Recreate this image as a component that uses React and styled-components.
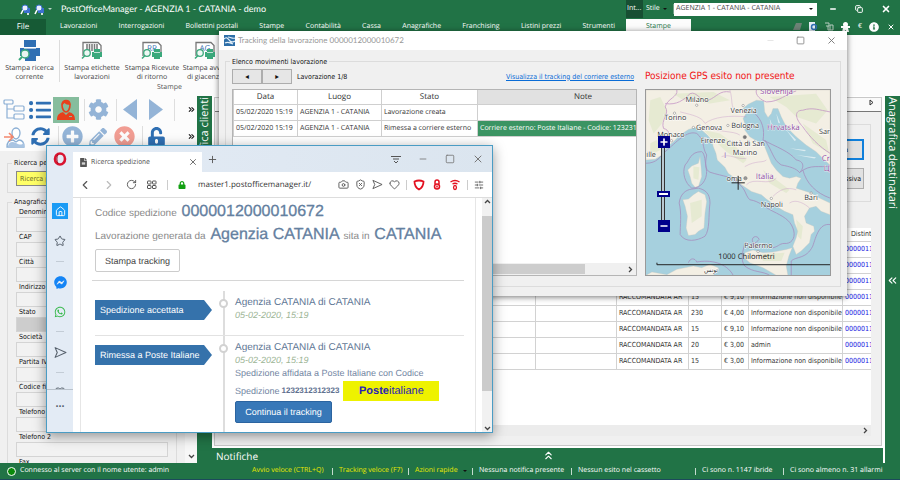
import React from 'react';
import styled, { createGlobalStyle, css } from 'styled-components';
import {
  FaCog,
  FaFacebookMessenger,
  FaInfoCircle,
  FaListUl,
  FaLock,
  FaPencilAlt,
  FaPlusCircle,
  FaSyncAlt,
  FaTimesCircle,
  FaUnlockAlt,
  FaWhatsapp,
  FaFileAlt,
} from 'react-icons/fa';
import {
  Camera,
  ChevronLeft,
  ChevronRight,
  ChevronsLeft,
  ChevronsRight,
  ChevronsUp,
  Copy,
  Heart,
  House,
  Minus,
  Plus,
  RotateCw,
  SendHorizontal,
  ShieldX,
  SlidersHorizontal,
  Square,
  Star,
  X,
} from 'lucide-react';

const ui = '"Open Sans", "Noto Sans", sans-serif';
const tahoma = '"DejaVu Sans Condensed", "DejaVu Sans", sans-serif';
const helvetica = '"Liberation Sans", Arial, sans-serif';

const GlobalStyle = createGlobalStyle`
  * {
    box-sizing: border-box;
  }

  body {
    margin: 0;
    overflow: hidden;
    font-family: ${ui};
    font-size: 7px;
    line-height: 10px;
    color: #333;
    background: #217346;
    text-rendering: geometricPrecision;
  }

  button, input, select {
    margin: 0;
    padding: 0;
    font: inherit;
    color: inherit;
    text-rendering: inherit;
  }
`;

const Desktop = styled.div`
  position: relative;
  display: flex;
  flex-direction: column;
  height: 100vh;
  overflow: hidden;
`;

/* ---------- title bar and menu ---------- */

const TitleBar = styled.header`
  display: flex;
  align-items: center;
  height: 18px;
  padding-left: 20px;
  background: #217346;
  color: #fff;
`;

const QuickIcons = styled.div`
  display: flex;
  align-items: center;
  gap: 4px;
  width: 41px;
`;

const AppTitle = styled.h1`
  flex: 1;
  margin: 0;
  font-family: Lato, sans-serif;
  font-size: 9px;
  font-weight: 400;
`;

const ContextTab = styled.div`
  align-self: stretch;
  width: 17px;
  padding: 4px 0 0 1px;
  background: #174f33;
  white-space: nowrap;
`;

const StyleButton = styled.button`
  display: flex;
  align-items: center;
  justify-content: space-between;
  width: 31px;
  padding: 0 6px 0 3px;
  border: 0;
  border-right: 1px solid #6fa286;
  background: none;
`;

const Caret = styled.span`
  width: 0;
  height: 0;
  border: 2px solid transparent;
  border-top-color: ${(p) => p.$color || '#111'};
  border-bottom: 0;
`;

const SelectBox = styled.label`
  display: flex;
  align-items: center;
  width: 143px;
  height: 13px;
  padding-right: 4px;
  background: #fff;
`;

const AgencySelect = styled.select`
  flex: 1;
  appearance: none;
  padding-left: 2px;
  border: 0;
  background: none;
  color: #444;
`;

const WindowButtons = styled.div`
  display: flex;
  align-items: center;
  justify-content: space-around;
  width: 80px;
  margin-left: 3px;
`;

const IconButton = styled.button`
  display: flex;
  align-items: center;
  justify-content: center;
  border: 0;
  background: none;
  color: ${(p) => p.$color || 'inherit'};
`;

const MenuBar = styled.nav`
  display: flex;
  align-items: center;
  height: 17px;
  background: #217346;
  color: #fff;
`;

const FileTab = styled.button`
  width: 46px;
  height: 16px;
  margin-right: 14px;
  border: 0;
  background: #165a35;
  font-size: 8px;
`;

const MenuItems = styled.div`
  display: flex;
  justify-content: space-between;
  align-items: center;
  width: 555px;
  margin-right: 11px;
`;

const MenuItem = styled.button`
  border: 0;
  background: none;
  white-space: nowrap;
`;

const ActiveMenu = styled.button`
  width: 65px;
  height: 16px;
  border: 0;
  background: #fcfcfc;
  color: #217346;
`;

const MenuTools = styled.div`
  flex: 1;
  display: flex;
  align-items: center;
  justify-content: space-between;
  padding: 0 5px 0 102px;
`;

/* ---------- ribbon ---------- */

const Ribbon = styled.section`
  display: flex;
  flex-direction: column;
  height: 61px;
  padding-top: 5px;
  background: #fcfcfc;
`;

const RibbonRow = styled.div`
  display: flex;
  height: 42px;
`;

const RibbonButton = styled.button`
  display: flex;
  flex-direction: column;
  align-items: center;
  width: ${(p) => p.$width || 59}px;
  border: 0;
  border-right: ${(p) => (p.$divided ? '1px solid #dcdcdc' : '0')};
  background: none;
  line-height: 9px;
  color: #444;
  text-align: center;
  white-space: nowrap;

  svg {
    margin-bottom: 2px;
    flex: none;
  }
`;

const RibbonCaption = styled.div`
  padding-left: 157px;
  line-height: 12px;
  color: #555;
`;

/* ---------- main area ---------- */

const Main = styled.main`
  flex: 1;
  display: flex;
  min-height: 0;
`;

const Side = styled.aside`
  display: flex;
  flex-direction: column;
  width: 197px;
  background: #f0f0f0;
`;

const Toolbars = styled.div`
  height: 55px;
  padding-left: 1px;
  background: #fcfcfc;
`;

const ToolRow = styled.div`
  display: flex;
  align-items: center;
  height: 27px;
`;

const ToolSeparator = styled.span`
  width: 6px;
  height: 22px;
  border-right: 1px solid #dedede;
`;

const Tool = styled.button`
  display: flex;
  align-items: center;
  justify-content: center;
  width: 26px;
  height: 26px;
  border: 0;
  background: ${(p) => (p.$active ? '#86bd9d' : 'none')};
  color: ${(p) => p.$color || '#2f6fb3'};
  opacity: ${(p) => (p.$dim ? 0.5 : 1)};
`;

const Overflow = styled(Tool)`
  width: 12px;
  margin-left: auto;
`;

const SideBody = styled.div`
  flex: 1;
  display: flex;
  min-height: 0;
`;

const SideForm = styled.form`
  flex: 1;
  min-height: 0;
  overflow: hidden;
  padding: 7px 8px 0 7px;
  font-family: ${tahoma};
  font-size: 7px;
  color: #111;
`;

const Group = styled.fieldset`
  margin: 0 0 4px;
  padding: ${(p) => p.$padding || '3px 8px 6px'};
  border: 1px solid #dcdcdc;
  min-width: 0;

  legend {
    margin-left: -4px;
    padding: 0 2px;
  }
`;

const Field = styled.label`
  display: block;
  height: 25px;

  span {
    display: block;
    padding-left: 3px;
  }
`;

const fieldBox = css`
  display: block;
  width: 100%;
  height: 15px;
  border: 1px solid #d4d4d4;
  border-radius: 0;
  background: ${(p) => p.$bg || '#f2f2f2'};
`;

const TextInput = styled.input`
  ${fieldBox}
`;

const FieldSelect = styled.select`
  ${fieldBox}
  appearance: none;
`;

const SearchInput = styled.input`
  ${fieldBox}
  padding-left: 3px;
  border: 1px solid #888;
  background: #ffff66;
  color: #6b6b2c;
`;

const SideScroll = styled.div`
  display: flex;
  align-items: flex-end;
  justify-content: center;
  width: 12px;
  padding-bottom: 3px;
  background: #f7f7f7;
`;

const Strip = styled.div`
  display: flex;
  flex-direction: column;
  align-items: center;
  width: 15px;
  padding-top: 1px;
  background: #217346;
  color: #fff;
  font-size: 11px;
  line-height: 15px;

  span {
    writing-mode: vertical-rl;
    transform: ${(p) => (p.$up ? 'rotate(180deg)' : 'none')};
  }

  svg {
    margin-top: 65px;
  }
`;

const Center = styled.div`
  flex: 1;
  display: flex;
  flex-direction: column;
  min-width: 0;
  border-right: 2px solid #fff;
  background: #fff;
`;

const CenterPanel = styled.div`
  flex: 1;
  display: flex;
  flex-direction: column;
  min-height: 0;
  margin: 1px 1px 2px 2px;
  border: 1px solid #c8c8c8;
  background: #f0f0f0;
  font-family: ${tahoma};
  font-size: 7px;
`;

const PanelHead = styled.div`
  display: flex;
  justify-content: flex-end;
  align-items: center;
  height: 14px;
  padding-right: 7px;
  border-bottom: 1px solid #777;
  background: #fafafa;

  svg {
    margin-bottom: 4px;
  }
`;

const ActionBox = styled.div`
  display: flex;
  flex-direction: column;
  align-items: flex-end;
  gap: 8px;
  height: 78px;
  margin: 12px 10px 26px 4px;
  padding: 14px 6px 0 0;
  border: 1px solid #dcdcdc;
`;

const PanelButton = styled.button`
  width: 80px;
  height: 21px;
  padding-right: ${(p) => (p.$focus ? 14 : 2)}px;
  border: ${(p) => (p.$focus ? '2px solid #0f7fdb' : '1px solid #adadad')};
  background: #e1e1e1;
  color: #111;
  text-align: right;
`;

const GridScroller = styled.div`
  flex: 1;
  margin: 0 10px 0 3px;
  overflow: hidden;
  background: #fff;
`;

const ShipTable = styled.table`
  width: 700px;
  table-layout: fixed;
  border-collapse: collapse;
  line-height: 10px;
  white-space: nowrap;

  th {
    height: 13px;
    padding: 0 0 0 8px;
    border-right: 1px solid #ddd;
    font-weight: 400;
    text-align: left;
  }

  td {
    height: 16px;
    padding: 0 2px;
    border: 1px solid #d2d2d2;
    overflow: hidden;
  }

  td:last-child {
    color: #1414e0;
  }
`;

const PanelScroll = styled.div`
  display: flex;
  align-items: center;
  justify-content: flex-end;
  height: 11px;
  margin: 0 10px 9px 3px;
  padding-right: 2px;
  background: #ececec;
`;

const Notices = styled.div`
  display: flex;
  align-items: center;
  justify-content: space-between;
  height: 15px;
  padding: 0 328px 0 4px;
  background: #217346;
  color: #fff;
  font-size: 10px;
`;

/* ---------- status bar ---------- */

const StatusBar = styled.footer`
  display: grid;
  grid-template-columns: 252px 87px 76px 64px 99px 124px 88px 1fr;
  align-items: center;
  height: 17px;
  background: #217346;
  border-bottom: 1px solid #1c4a5c;
  color: #fff;
  white-space: nowrap;
`;

const StatusItem = styled.div`
  display: flex;
  align-items: center;
  justify-content: space-between;
  padding-right: 6px;
  color: ${(p) => (p.$accent ? '#e8e800' : '#fff')};

  i {
    width: 1px;
    height: 7px;
    background: #c4dccf;
  }
`;

const ServerState = styled.div`
  display: flex;
  align-items: center;
  gap: 4px;
  padding-left: 7px;
`;

const Led = styled.span`
  width: 9px;
  height: 9px;
  border: 1px solid #fff;
  border-radius: 50%;
  background: #0a8a0a;
`;

/* ---------- tracking window ---------- */

const TrackingWindow = styled.section`
  position: absolute;
  left: 219px;
  top: 31px;
  display: flex;
  flex-direction: column;
  width: 628px;
  height: 265px;
  background: #f0f0f0;
  box-shadow: 0 1px 6px rgba(0, 0, 0, 0.55);
`;

const TrackingTitle = styled.header`
  display: flex;
  align-items: center;
  gap: 3px;
  height: 20px;
  padding: 0 10px 0 5px;
  background: #fff;
  color: #999;

  h2 {
    flex: 1;
    margin: 0;
    font-family: Lato, sans-serif;
    font-size: 8px;
    font-weight: 400;
  }
`;

const TitleControls = styled.div`
  display: flex;
  align-items: center;
  gap: ${(p) => p.$gap}px;
  color: #777;
`;

const TrackingGroup = styled.fieldset`
  flex: 1;
  display: grid;
  grid-template-columns: 405px 1fr;
  column-gap: 8px;
  min-width: 0;
  margin: 7px 6px 9px;
  padding: 3px 9px 10px 6px;
  border: 1px solid #dcdcdc;
  font-family: ${tahoma};
  font-size: 7px;

  legend {
    margin-left: -2px;
    padding: 0 2px;
    color: #111;
  }
`;

const Column = styled.div`
  display: flex;
  flex-direction: column;
  min-height: 0;
`;

const Pager = styled.div`
  display: flex;
  align-items: center;
  height: 14px;
  margin-bottom: 5px;
  color: #111;

  span {
    flex: 1;
    padding-left: 5px;
  }
`;

const PagerButton = styled.button`
  width: 30px;
  height: 15px;
  border: 1px solid #adadad;
  background: #e6e6e6;
  font-size: 8px;
  line-height: 8px;
`;

const CourierLink = styled.a`
  padding-right: 3px;
  color: #0a6cd6;
`;

const MovesBox = styled.div`
  flex: 1;
  display: flex;
  flex-direction: column;
  justify-content: space-between;
  overflow: hidden;
  border: 1px solid #b5b5b5;
  background: #fff;
`;

const MovesTable = styled.table`
  width: 456px;
  table-layout: fixed;
  border-collapse: collapse;
  font-family: ${ui};
  white-space: nowrap;

  th {
    height: 15px;
    padding: 0;
    border: 1px solid #cfcfcf;
    border-top: 0;
    font-size: 8px;
    font-weight: 400;
  }

  th:last-child {
    background: #e1e1e1;
  }

  td {
    height: 16px;
    padding: 0 0 0 2px;
    border: 1px solid #cfcfcf;
    overflow: hidden;
  }
`;

const NoteCell = styled.td`
  background: ${(p) => (p.$selected ? '#3b9463' : '#fff')};
  color: #fff;
`;

const MovesScroll = styled.div`
  display: flex;
  align-items: center;
  justify-content: space-between;
  height: 12px;
  padding-right: 2px;
  background: #f0f0f0;
`;

const HThumb = styled.div`
  width: 352px;
  height: 10px;
  background: #cdcdcd;
`;

const GpsNote = styled.p`
  margin: 0 0 5px;
  font-size: 10px;
  line-height: 14px;
  color: #f01414;
  white-space: nowrap;
`;

const MapFrame = styled.div`
  position: relative;
  flex: 1;
  border: 1px solid #999;

  > svg {
    display: block;
    width: 100%;
    height: 100%;
  }
`;

const ZoomBar = styled.div`
  position: absolute;
  left: 11px;
  top: 46px;
  display: flex;
  flex-direction: column;
  align-items: center;
  width: 13px;
`;

const ZoomButton = styled.button`
  display: flex;
  align-items: center;
  justify-content: center;
  width: 12px;
  height: 12px;
  border: 0;
  background: #00008b;
  color: #fff;
`;

const ZoomRange = styled.input`
  appearance: none;
  writing-mode: vertical-lr;
  width: 13px;
  height: 72px;
  background: linear-gradient(90deg, transparent 4px, #333 4px 5px, #b8c8d0 5px 7px, #333 7px 8px, transparent 8px);

  &::-webkit-slider-thumb {
    appearance: none;
    width: 13px;
    height: 6px;
    border: 2px solid #00008b;
    background: #fff;
  }
`;

/* ---------- browser window ---------- */

const BrowserWindow = styled.section`
  position: absolute;
  left: 46px;
  top: 145px;
  display: grid;
  grid-template-columns: 26px 1fr;
  width: 447px;
  height: 288px;
  border: 1px solid #4a9cc4;
  background: #fff;
  box-shadow: 0 3px 12px rgba(0, 0, 0, 0.4);
`;

const BrowserSide = styled.nav`
  display: flex;
  flex-direction: column;
  align-items: center;
  padding-top: 6px;
  background: #e3ebf5;
  color: #555f6b;

  hr {
    width: 8px;
    margin: 0;
    border: 0;
    border-top: 1px solid #c3ccd6;
  }
`;

const SideIcon = styled.button`
  display: flex;
  align-items: center;
  justify-content: center;
  width: 16px;
  height: 16px;
  margin: ${(p) => p.$gap || '0'};
  border: 0;
  background: ${(p) => (p.$active ? '#1a9bf5' : 'none')};
  color: ${(p) => p.$color || 'inherit'};
  font-size: 8px;
`;

const HalfIcon = styled.div`
  width: 100%;
  height: 4px;
  margin-top: 13px;
  overflow: hidden;
  border-bottom: 1px solid #b9c2cc;
  text-align: center;
`;

const BrowserMain = styled.div`
  display: flex;
  flex-direction: column;
  min-width: 0;
  min-height: 0;
`;

const TabBar = styled.div`
  display: flex;
  align-items: center;
  height: 26px;
  padding-right: 8px;
  background: linear-gradient(90deg, #e3ebf5, #dbe5ef);
  color: #555;
`;

const BrowserTab = styled.div`
  display: flex;
  align-items: center;
  gap: 3px;
  align-self: flex-end;
  width: 129px;
  height: 20px;
  margin-right: 5px;
  padding: 0 4px 0 6px;
  background: #fff;

  span {
    flex: 1;
    font-family: ${tahoma};
  }
`;

const Spacer = styled.div`
  flex: 1;
`;

const AddressRow = styled.div`
  display: flex;
  align-items: center;
  gap: 6px;
  height: 26px;
  padding: 0 8px 0 5px;
  border-bottom: 1px solid #ddd;
  color: #555;
`;

const NavButtons = styled.div`
  display: flex;
  align-items: center;
  justify-content: space-between;
  width: 108px;
`;

const Address = styled.input`
  flex: 1;
  min-width: 0;
  padding-left: 6px;
  border: 0;
  background: none;
  color: #333;
  font-size: 8px;
`;

const Divider = styled.span`
  width: 1px;
  height: 10px;
  background: #ccc;
`;

const PageArea = styled.div`
  flex: 1;
  display: flex;
  min-height: 0;
`;

const Page = styled.article`
  flex: 1;
  overflow: hidden;
  margin: 0 6px 0 7px;
  padding: 4px 11px 0;
  border: solid #e6e6e6;
  border-width: 0 1px;
  font-family: ${helvetica};
  color: #8a8a8a;
  line-height: 12px;
`;

const Heading = styled.p`
  margin: 0;
  padding-left: 3px;
  font-size: 10px;
  line-height: 23px;
  white-space: nowrap;

  strong {
    margin: 0 1px 0 2px;
    font-size: 16px;
    font-weight: 400;
    line-height: 20px;
    color: #6480a0;
    -webkit-text-stroke: 0.3px #6480a0;
  }
`;

const PrintButton = styled.button`
  display: block;
  width: 85px;
  height: 23px;
  margin: 1px 0 8px 3px;
  border: 1px solid #ccc;
  border-radius: 2px;
  background: #fff;
  color: #444;
  font-size: 9px;
`;

const Timeline = styled.ol`
  margin: 0;
  padding: 10px 0 0 3px;
  border-top: 1px solid #d6d6d6;
  list-style: none;
`;

const Step = styled.li`
  display: grid;
  grid-template-columns: 124px 9px 1fr;
  min-height: ${(p) => p.$height}px;

  &:not(:last-child) {
    border-bottom: 1px solid #e2e2e2;
  }
`;

const Arrow = styled.div`
  width: 117px;
  height: 20px;
  margin-top: 9px;
  padding-left: 5px;
  background: #3572ab;
  clip-path: polygon(0 0, 109px 0, 100% 50%, 109px 100%, 0 100%);
  color: #fff;
  font-size: 9px;
  line-height: 20px;
`;

const Rail = styled.div`
  display: flex;
  justify-content: center;
  padding-top: 8px;
  background: linear-gradient(90deg, transparent 4px, #ddd 4px 6px, transparent 6px);

  i {
    width: 9px;
    height: 9px;
    border: 2px solid #d2d2d2;
    border-radius: 50%;
    background: #fff;
  }
`;

const StepBody = styled.div`
  padding: 6px 0 0 7px;
  font-size: 9px;
  color: #7286a3;
  white-space: nowrap;

  h3 {
    margin: 0;
    font-size: 10px;
    font-weight: 400;
    color: #5f7896;
  }

  time {
    display: block;
    font-style: italic;
    color: #9db596;
  }

  p {
    margin: 0;
    line-height: 15px;
  }
`;

const CodeLine = styled.div`
  display: flex;
  align-items: center;
  height: 20px;

  b {
    margin: 0 4px 0 2px;
    font-size: 8px;
    color: #5f7190;
  }
`;

const PosteLogo = styled.span`
  width: 96px;
  height: 20px;
  background: #eef200;
  color: #2a1fb5;
  font-size: 11px;
  line-height: 20px;
  text-align: center;

  strong {
    font-weight: 700;
  }
`;

const ContinueButton = styled.button`
  width: 97px;
  height: 22px;
  border: 1px solid #2b64a0;
  border-radius: 2px;
  background: #3878b8;
  color: #fff;
`;

const VScroll = styled.div`
  display: flex;
  flex-direction: column;
  justify-content: space-between;
  align-items: center;
  width: 10px;
  background: #f1f1f1;
`;

const VThumb = styled.div`
  width: 100%;
  height: 175px;
  margin-bottom: 24px;
  background: #cbcbcb;
`;

/* ---------- drawings ---------- */

const SmallChevron = ({ up, right }) => (
  <svg width="7" height="7" viewBox="0 0 7 7" fill="none" stroke="#444" strokeWidth="1.3">
    <path d={right ? 'M2 1L4.5 3.5L2 6' : up ? 'M1 5L3.5 2.5L6 5' : 'M1 2L3.5 4.5L6 2'} />
  </svg>
);

const QuickPrint = () => (
  <svg width="10" height="11" viewBox="0 0 10 11">
    <path d="M4 4h6v5H4z" fill="#3b70d0" />
    <circle cx="5" cy="4" r="3" fill="#e8eefc" stroke="#3b70d0" />
    <path d="M3 6L1 10M8 9v2" stroke="#fff" strokeWidth="1.6" />
  </svg>
);

const PrinterIcon = () => (
  <svg width="24" height="22" viewBox="0 0 24 22">
    <path d="M6 0h12v7H6zM2 8h20v8H2zM7 14h11v7H7z" fill="#2f6fb3" />
    <path d="M6 8h12" stroke="#fff" strokeWidth="1.2" />
    <circle cx="7" cy="14" r="4" fill="#e9f4f1" stroke="#3ba97c" strokeWidth="1.4" />
    <path d="M4 17l-3 3" stroke="#3ba97c" strokeWidth="2" />
  </svg>
);

const LabelIcon = ({ text }) => (
  <svg width="24" height="22" viewBox="0 0 24 22">
    <path d="M3 16V2.500h15l3 3V14" fill="#fff" stroke="#777" strokeWidth="1.3" />
    {text ? (
      <text x="12" y="11" textAnchor="middle" fontSize="8" fontFamily="Open Sans" fill="#3a6fb0">{text}</text>
    ) : (
      <path d="M7 4v7M9.500 4v7M12 4v7M14.500 4v7M17 4v7" stroke="#777" strokeWidth="1.5" />
    )}
    <circle cx="7" cy="13" r="3.300" fill="#eef8f4" stroke="#3ba97c" strokeWidth="1.3" />
    <path d="M5 15.500l-3 3" stroke="#3ba97c" strokeWidth="1.6" />
    <path d="M14 9h6v3h-6zM12 12h10v5H12zM14 15h6v4h-6z" fill="#3ba97c" />
    <path d="M14 12.500h6" stroke="#fff" strokeWidth=".7" />
  </svg>
);

const TreeIcon = () => (
  <svg width="22" height="22" viewBox="0 0 22 22" fill="none" stroke="#8aaed4" strokeWidth="1.2">
    <path d="M4 5v14h7M4 10h7" />
    <rect x="1" y="1" width="9" height="4" rx="1" />
    <rect x="11" y="7" width="10" height="5" rx="1" />
    <rect x="11" y="15" width="10" height="5" rx="1" />
  </svg>
);

const OperatorIcon = () => (
  <svg width="22" height="22" viewBox="0 0 22 22">
    <path d="M7 6c0-6 8-6 8 0c0 4-2 7-4 7S7 10 7 6z" fill="#86bd9d" stroke="#e8401c" strokeWidth="1.6" />
    <path d="M6.500 6c0-6 9-6 9 0c-3 0-5-1-6-2c-1 1-2 2-3 2z" fill="#e8401c" />
    <path d="M2 21c0-6 3-7 6-8l3 3 3-3c3 1 6 2 6 8z" fill="#e8401c" />
    <path d="M14 17.500h3" stroke="#86bd9d" />
  </svg>
);

const CustomerIcon = () => (
  <svg width="22" height="22" viewBox="0 0 22 22">
    <path d="M9 7a4 5 0 0 1 8 0c0 3-2 6-4 6s-4-3-4-6zM4 21c0-5 3-7 6-7l3 2 3-2c3 0 5 2 5 7z" fill="#fff" stroke="#8aaed4" strokeWidth="1.3" />
    <path d="M5 20c1-4 4-5 8-3s5 2 8 0v4H5z" fill="#a9c4e2" />
    <path d="M1 11h8M6 7l4 4-4 4" fill="none" stroke="#f2866c" strokeWidth="1.6" />
  </svg>
);

const Triangle = ({ right }) => (
  <svg width="16" height="21" viewBox="0 0 16 21">
    <path d={right ? 'M1 0L15 10.500L1 21z' : 'M15 0L1 10.500L15 21z'} fill="#2f6fb3" />
  </svg>
);

const BrandIcon = () => (
  <svg width="11" height="11" viewBox="0 0 11 11">
    <rect width="11" height="11" fill="#2d6ea8" />
    <path d="M0 4c3-3 4 0 6 2s3 1 5 0M1 8c3-2 5 0 8 1M4 2c3 0 4 2 7 1" fill="none" stroke="#e5f0f8" strokeWidth="1.2" />
  </svg>
);

const OperaIcon = () => (
  <svg width="14" height="14" viewBox="0 0 14 14">
    <ellipse cx="7" cy="7" rx="5" ry="5.500" fill="none" stroke="#d91430" strokeWidth="2.600" />
    <path d="M5 2.500C3.500 5 3.500 9 5 11.500" fill="none" stroke="#a50d22" strokeWidth="1" />
  </svg>
);

const PlaneIcon = ({ size }) => (
  <svg width={size} height={size} viewBox="0 0 12 12" fill="none" stroke="currentColor" strokeLinejoin="round">
    <path d="M1 1.500L11 6L1 10.500L3 6z" />
  </svg>
);

const SpeedDial = () => (
  <svg width="10" height="10" viewBox="0 0 10 10" fill="none" stroke="#555">
    <rect x=".5" y="1" width="3.500" height="3" rx=".5" />
    <rect x="5.500" y="1" width="3.500" height="3" rx=".5" />
    <rect x=".5" y="5.500" width="3.500" height="3" rx=".5" />
    <rect x="5.500" y="5.500" width="3.500" height="3" rx=".5" />
  </svg>
);

const TabMenuIcon = () => (
  <svg width="10" height="9" viewBox="0 0 10 9" fill="none" stroke="#555">
    <path d="M0 1.500h10M2 4h6M3 6l2 2 2-2" />
  </svg>
);

const VpnIcon = ({ kind }) => (
  <svg width="12" height="12" viewBox="0 0 12 12" fill="none" stroke="#e3101f" strokeWidth="1.800">
    {kind === 'shield' && <path d="M1.500 2.500Q6 .5 10.500 2.500Q10.500 8 6 10.500Q1.500 8 1.500 2.500z" />}
    {kind === 'lock' && <path d="M4 5V3a2 2 0 0 1 4 0v2M6 5a2.500 2.500 0 1 1 0 5a2.500 2.500 0 1 1 0-5M6 6.500v2" strokeWidth="1.500" />}
    {kind === 'wifi' && <path d="M1.500 3Q6 0 10.500 3M3.500 5Q6 3.500 8.500 5M6 6.500a1.300 1.800 0 1 1 0 4a1.300 1.800 0 1 1 0-4" strokeWidth="1.300" />}
  </svg>
);

const places = [
  ['Milano', 166, 65],
  ['Venezia', 302, 98],
  ['Torino', 102, 121],
  ['Genova', 198, 149],
  ['Bologna', 304, 144],
  ['Monaco', 81, 171],
  ['Firenze', 212, 188],
  ['Città di San', 290, 198],
  ['Marino', 309, 225],
  ['oma', 290, 303],
  ['Napoli', 393, 382],
  ['Bari', 524, 362],
  ['Palermo', 343, 507],
  ['ille', 48, 231],
  ['Sar', 569, 162],
];

const countries = [
  ['Slovenija', 391, 41],
  ['Hrvatska', 412, 149],
  ['Italia', 378, 298],
  ['I', 282, 235],
  ['Cr', 577, 242],
  ['Ц', 583, 272],
];

const towns = [
  [200, 75], [133, 99], [340, 76], [190, 142], [294, 136], [124, 182], [425, 356], [545, 340], [385, 516],
];

const ItalyMap = () => (
  <svg viewBox="47 29 555 559" preserveAspectRatio="none" fontFamily="Open Sans, sans-serif" fontSize="22">
    <rect x="47" y="29" width="555" height="559" fill="#a6d0de" />
    <g fill="#f3efe4" stroke="#c9c8c0">
      <path d="M47 29V240L75 238L95 225L110 200L130 185L150 165L175 148L195 142L215 150L232 165L245 180L250 200L258 220L262 240L285 262L295 280L315 295L335 315L365 335L395 345L410 358L440 380L465 395L490 405L495 430L505 455L500 475L490 500L500 525L515 515L540 490L545 465L555 455L553 440L530 430L525 410L540 385L560 380L575 395L602 405V370L570 355L545 340L500 325L505 310L515 295L500 290L480 295L460 290L440 270L425 250L415 225L405 200L385 185L360 170L345 150L345 130L340 115L350 98L340 85L355 72L380 60L402 62L405 95L415 112L425 100L430 85L445 85L455 110L465 130L480 150L500 170L530 195L560 215L580 235L602 255V29z" />
      <path d="M210 230L213 260L215 290L205 320L195 322L185 310L180 290L173 270L185 258L205 250z" />
      <path d="M205 335L225 345L230 365L225 400L222 445L205 455L195 465L175 468L168 445L172 410L165 380L158 360L175 358L190 345z" />
      <path d="M345 520L370 512L400 520L430 518L470 510L488 505L478 530L470 560L475 588H440L400 565L360 550L343 535z" />
      <path d="M47 588L65 578L110 586L140 570L190 560L215 565L240 555L265 565L250 588z" />
    </g>
    <g fill="#d3e4b9" opacity=".4">
      <path d="M60 60L90 50L110 90L95 130L70 160L55 120zM130 40L250 35L300 60L240 70L160 60zM420 50L560 40L595 90L560 130L500 110L470 80zM220 150L270 160L310 190L350 240L340 250L290 215L240 170z" />
      <path d="M400 270L440 300L480 330L470 340L420 310zM190 260L208 262L205 300L190 295zM180 370L215 360L215 410L185 430zM500 420L520 440L515 480L505 470zM390 525L465 520L455 545L400 545zM520 130L590 180L600 220L550 190zM60 190L80 180L90 210L60 225z" />
    </g>
    <g fill="none" stroke="#a67bb5" strokeWidth="2.500" opacity=".75">
      <path d="M47 250C80 250 90 230 105 215C140 185 170 150 200 160C225 180 215 200 230 225C225 250 225 270 240 277C280 290 310 290 325 310C350 330 345 345 360 360C390 365 400 380 430 395C460 410 480 420 490 445C500 470 490 490 470 492C450 490 450 500 430 505" />
      <path d="M215 215C180 215 180 240 165 255C155 280 165 310 185 325C215 325 230 300 230 275C225 245 225 220 215 215z" />
      <path d="M185 328C165 330 150 345 147 370C155 400 150 440 150 465C165 490 200 485 225 470C240 450 235 410 240 370C240 340 225 330 205 325z" />
      <path d="M370 95C400 120 405 150 400 180C440 200 480 215 500 240C530 245 520 270 510 278C500 265 480 260 455 255C430 240 430 215 405 180M510 278C545 250 570 265 602 258M520 270C530 310 560 340 602 355" />
      <path d="M602 435C570 430 560 470 550 500C530 540 500 530 485 545V588M370 490C360 470 385 465 388 480C380 490 365 500 345 490C340 515 330 540 345 560C370 580 400 575 420 588M175 550C180 535 195 535 200 548C240 540 290 550 310 588" />
    </g>
    <g fill="none" stroke="#c08bc4" strokeWidth="3" opacity=".7">
      <path d="M140 29C145 50 110 55 105 80C120 100 90 120 100 145C120 150 115 165 120 180M105 70C140 75 160 60 180 40C200 30 215 70 235 60C260 50 270 29 300 35M380 29C375 45 395 60 410 65C450 65 470 40 500 32M602 95C570 90 550 80 520 90C490 90 500 120 520 140C540 170 570 200 602 220" />
      <path d="M150 95C190 105 215 110 225 130C250 110 300 105 350 110M300 29C310 60 300 80 320 95M230 135C260 160 310 150 330 165M275 230C300 220 320 240 350 235M345 260C380 240 400 250 410 240M350 315C370 290 420 320 440 295M430 350C450 330 470 320 500 330M480 370C500 355 530 375 540 385" strokeWidth="1.500" />
    </g>
    <g fill="#e8f3f5" opacity=".8">
      <path d="M420 115L428 135L424 140zM440 100L452 130L446 128zM470 150L500 180L495 183zM480 205L530 210L525 214zM500 225L560 232L555 236z" />
    </g>
    <g fill="#fff" stroke="#777" strokeWidth="1.500">
      {towns.map(([x, y]) => <circle key={`${x}-${y}`} cx={x} cy={y} r="3.500" />)}
      <circle cx="345" cy="171" r="5" fill="#777" />
      <circle cx="347" cy="295" r="5" fill="#999" />
    </g>
    <g fill="#333" stroke="#fff" strokeWidth="3" paintOrder="stroke">
      {places.map(([name, x, y]) => <text key={name} x={x} y={y}>{name}</text>)}
      <text x="222" y="578" fontFamily="DejaVu Sans" fontSize="18">تونس</text>
    </g>
    <g fill="#8d4a9c" stroke="#fff" strokeWidth="2" paintOrder="stroke" fontSize="24">
      {countries.map(([name, x, y]) => <text key={name} x={x} y={y}>{name}</text>)}
    </g>
    <text x="265" y="539" fill="#222" fontSize="23">1000 Chilometri</text>
    <path d="M80 550V556H602M325 288V330M305 309H345" fill="none" stroke="#222" strokeWidth="3" />
  </svg>
);

/* ---------- data ---------- */

const menus = [
  'Lavorazioni', 'Interrogazioni', 'Bollettini postali', 'Stampe', 'Contabilità',
  'Cassa', 'Anagrafiche', 'Franchising', 'Listini prezzi', 'Strumenti',
];

const fields = [
  'Denominazione', 'CAP', 'Città', 'Indirizzo', 'Stato', 'Società', 'Partita IVA',
  'Codice fiscale', 'Telefono', 'Telefono 2', 'Fax',
];

const shipments = [
  ['15', '€ 3,00', 'Informazione non disponibile'],
  ['15', '€ 3,00', 'Informazione non disponibile'],
  ['15', '€ 9,10', 'Informazione non disponibile'],
  ['15', '€ 9,10', 'Informazione non disponibile'],
  ['230', '€ 4,00', 'Informazione non disponibile'],
  ['15', '€ 9,10', 'Informazione non disponibile'],
  ['20', '€ 3,00', 'admin'],
  ['15', '€ 3,00', 'Informazione non disponibile'],
];

const SidePanel = () => (
  <Side>
    <Toolbars>
      <ToolRow>
        <Tool aria-label="Albero"><TreeIcon /></Tool>
        <Tool aria-label="Elenco"><FaListUl size={22} /></Tool>
        <Tool aria-label="Cliente" $active><OperatorIcon /></Tool>
        <ToolSeparator />
        <Tool aria-label="Impostazioni" $dim><FaCog size={21} /></Tool>
        <ToolSeparator />
        <Tool aria-label="Precedente" $dim><Triangle /></Tool>
        <Tool aria-label="Successivo" $dim><Triangle right /></Tool>
        <ToolSeparator />
        <Overflow aria-label="Altro" $color="#222"><ChevronsRight size={9} strokeWidth={3} /></Overflow>
      </ToolRow>
      <ToolRow>
        <Tool aria-label="Carica cliente"><CustomerIcon /></Tool>
        <Tool aria-label="Aggiorna"><FaSyncAlt size={19} /></Tool>
        <ToolSeparator />
        <Tool aria-label="Aggiungi" $dim><FaPlusCircle size={21} /></Tool>
        <Tool aria-label="Modifica" $dim><FaPencilAlt size={18} /></Tool>
        <Tool aria-label="Elimina" $dim $color="#e8402c"><FaTimesCircle size={21} /></Tool>
        <ToolSeparator />
        <Tool aria-label="Sblocca"><FaUnlockAlt size={19} /></Tool>
        <Overflow aria-label="Altri comandi" $color="#222"><ChevronsRight size={9} strokeWidth={3} /></Overflow>
      </ToolRow>
    </Toolbars>
    <SideBody>
      <SideForm>
        <Group>
          <legend>Ricerca per</legend>
          <SearchInput aria-label="Ricerca per" defaultValue="Ricerca per nome" />
        </Group>
        <Group $padding="0 8px 0">
          <legend>Anagrafica</legend>
          {fields.map((name) => (
            <Field key={name}>
              <span>{name}</span>
              {name === 'Stato' ? <FieldSelect $bg="#cdcdcd" /> : <TextInput />}
            </Field>
          ))}
        </Group>
      </SideForm>
      <SideScroll><SmallChevron /></SideScroll>
    </SideBody>
  </Side>
);

const CenterArea = () => (
  <Center>
    <CenterPanel>
      <PanelHead>
        <svg width="5" height="7" viewBox="0 0 5 7"><path d="M1 1L4 3.500L1 6z" fill="none" stroke="#333" /></svg>
      </PanelHead>
      <ActionBox>
        <PanelButton $focus>Ricerca</PanelButton>
        <PanelButton>Ricerca massiva</PanelButton>
      </ActionBox>
      <GridScroller>
        <ShipTable>
          <colgroup>
            <col style={{ width: 317 }} />
            <col style={{ width: 81 }} />
            <col style={{ width: 72 }} />
            <col style={{ width: 33 }} />
            <col style={{ width: 27 }} />
            <col style={{ width: 94 }} />
            <col />
          </colgroup>
          <thead>
            <tr><th /><th /><th>Prodotto</th><th>Peso</th><th /><th>Utente</th><th>Distinta</th></tr>
          </thead>
          <tbody>
            {shipments.map(([weight, price, user], i) => (
              <tr key={i}>
                <td />
                <td />
                <td>RACCOMANDATA AR</td>
                <td>{weight}</td>
                <td>{price}</td>
                <td>{user}</td>
                <td>0000011</td>
              </tr>
            ))}
          </tbody>
        </ShipTable>
      </GridScroller>
      <PanelScroll><SmallChevron right /></PanelScroll>
    </CenterPanel>
    <Notices>
      <span>Notifiche</span>
      <ChevronsUp size={13} />
    </Notices>
  </Center>
);

const Tracking = () => (
  <TrackingWindow>
    <TrackingTitle>
      <BrandIcon />
      <h2>Tracking della lavorazione 0000012000010672</h2>
      <TitleControls $gap={21}>
        <IconButton aria-label="Riduci" $color="#ddd"><Minus size={9} /></IconButton>
        <IconButton aria-label="Ingrandisci"><Square size={9} /></IconButton>
        <IconButton aria-label="Chiudi"><X size={11} /></IconButton>
      </TitleControls>
    </TrackingTitle>
    <TrackingGroup>
      <legend>Elenco movimenti lavorazione</legend>
      <Column>
        <Pager>
          <PagerButton aria-label="Precedente">◂</PagerButton>
          <PagerButton aria-label="Successiva">▸</PagerButton>
          <span>Lavorazione 1/8</span>
          <CourierLink href="#corriere">Visualizza il tracking del corriere esterno</CourierLink>
        </Pager>
        <MovesBox>
          <MovesTable>
            <colgroup>
              <col style={{ width: 64 }} />
              <col style={{ width: 84 }} />
              <col style={{ width: 96 }} />
              <col />
            </colgroup>
            <thead>
              <tr><th>Data</th><th>Luogo</th><th>Stato</th><th>Note</th></tr>
            </thead>
            <tbody>
              <tr>
                <td>05/02/2020 15:19</td>
                <td>AGENZIA 1 - CATANIA</td>
                <td>Lavorazione creata</td>
                <NoteCell />
              </tr>
              <tr>
                <td>05/02/2020 15:19</td>
                <td>AGENZIA 1 - CATANIA</td>
                <td>Rimessa a corriere esterno</td>
                <NoteCell $selected>Corriere esterno: Poste Italiane - Codice: 1232312312323</NoteCell>
              </tr>
            </tbody>
          </MovesTable>
          <MovesScroll>
            <HThumb />
            <SmallChevron right />
          </MovesScroll>
        </MovesBox>
      </Column>
      <Column>
        <GpsNote>Posizione GPS esito non presente</GpsNote>
        <MapFrame>
          <ItalyMap />
          <ZoomBar>
            <ZoomButton aria-label="Avvicina"><Plus size={10} strokeWidth={4} /></ZoomButton>
            <ZoomRange type="range" aria-label="Zoom" defaultValue={65} />
            <ZoomButton aria-label="Allontana"><Minus size={10} strokeWidth={4} /></ZoomButton>
          </ZoomBar>
        </MapFrame>
      </Column>
    </TrackingGroup>
  </TrackingWindow>
);

const Browser = () => (
  <BrowserWindow>
    <BrowserSide>
      <OperaIcon />
      <SideIcon aria-label="Home" $active $color="#fff" $gap="37px 0 14px"><House size={11} /></SideIcon>
      <SideIcon aria-label="Preferiti" $gap="0 0 12px"><Star size={12} /></SideIcon>
      <hr />
      <SideIcon aria-label="Messenger" $color="#1484f5" $gap="12px 0 14px"><FaFacebookMessenger size={13} /></SideIcon>
      <SideIcon aria-label="WhatsApp" $color="#35b84a" $gap="0 0 11px"><FaWhatsapp size={12} /></SideIcon>
      <hr />
      <SideIcon aria-label="Flow" $gap="12px 0"><PlaneIcon size={13} /></SideIcon>
      <hr />
      <HalfIcon><Heart size={12} /></HalfIcon>
      <SideIcon aria-label="Altro" $gap="9px 0 0">•••</SideIcon>
    </BrowserSide>
    <BrowserMain>
      <TabBar>
        <BrowserTab>
          <FaFileAlt size={9} />
          <span>Ricerca spedizione</span>
          <IconButton aria-label="Chiudi scheda"><X size={10} /></IconButton>
        </BrowserTab>
        <IconButton aria-label="Nuova scheda"><Plus size={11} /></IconButton>
        <Spacer />
        <TitleControls $gap={17}>
          <IconButton aria-label="Menu schede"><TabMenuIcon /></IconButton>
          <IconButton aria-label="Riduci"><Minus size={10} /></IconButton>
          <IconButton aria-label="Ingrandisci"><Square size={10} /></IconButton>
          <IconButton aria-label="Chiudi"><X size={12} /></IconButton>
        </TitleControls>
      </TabBar>
      <AddressRow>
        <NavButtons>
          <IconButton aria-label="Indietro"><ChevronLeft size={14} /></IconButton>
          <IconButton aria-label="Avanti" $color="#bbb"><ChevronRight size={14} /></IconButton>
          <IconButton aria-label="Ricarica"><RotateCw size={11} /></IconButton>
          <IconButton aria-label="Accesso rapido"><SpeedDial /></IconButton>
          <Divider />
          <FaLock size={8} color="#12a012" />
        </NavButtons>
        <Address aria-label="Indirizzo" defaultValue="master1.postofficemanager.it/" />
        <IconButton aria-label="Istantanea"><Camera size={11} /></IconButton>
        <IconButton aria-label="Protezione"><ShieldX size={11} /></IconButton>
        <IconButton aria-label="Invia"><PlaneIcon size={11} /></IconButton>
        <IconButton aria-label="Preferito"><Heart size={11} /></IconButton>
        <Divider />
        <VpnIcon kind="shield" />
        <VpnIcon kind="lock" />
        <VpnIcon kind="wifi" />
        <Divider />
        <IconButton aria-label="Configura"><SlidersHorizontal size={10} /></IconButton>
      </AddressRow>
      <PageArea>
        <Page>
          <Heading>Codice spedizione <strong>0000012000010672</strong></Heading>
          <Heading>Lavorazione generata da <strong>Agenzia CATANIA</strong> sita in <strong>CATANIA</strong></Heading>
          <PrintButton>Stampa tracking</PrintButton>
          <Timeline>
            <Step $height={45}>
              <Arrow>Spedizione accettata</Arrow>
              <Rail><i /></Rail>
              <StepBody>
                <h3>Agenzia CATANIA di CATANIA</h3>
                <time>05-02-2020, 15:19</time>
              </StepBody>
            </Step>
            <Step $height={100}>
              <Arrow>Rimessa a Poste Italiane</Arrow>
              <Rail><i /></Rail>
              <StepBody>
                <h3>Agenzia CATANIA di CATANIA</h3>
                <time>05-02-2020, 15:19</time>
                <p>Spedizione affidata a Poste Italiane con Codice</p>
                <CodeLine>
                  Spedizione <b>1232312312323</b>
                  <PosteLogo><strong>Poste</strong>italiane</PosteLogo>
                </CodeLine>
                <ContinueButton>Continua il tracking</ContinueButton>
              </StepBody>
            </Step>
          </Timeline>
        </Page>
        <VScroll>
          <SmallChevron up />
          <VThumb />
          <SmallChevron />
        </VScroll>
      </PageArea>
    </BrowserMain>
  </BrowserWindow>
);

const App = () => (
  <>
    <GlobalStyle />
    <Desktop>
      <TitleBar>
        <QuickIcons>
          <QuickPrint />
          <QuickPrint />
          <Caret $color="#bcd6c8" />
        </QuickIcons>
        <AppTitle>PostOfficeManager - AGENZIA 1 - CATANIA - demo</AppTitle>
        <ContextTab>Int...</ContextTab>
        <StyleButton>Stile <Caret /></StyleButton>
        <SelectBox>
          <AgencySelect aria-label="Agenzia">
            <option>AGENZIA 1 - CATANIA - CATANIA</option>
          </AgencySelect>
          <Caret />
        </SelectBox>
        <WindowButtons>
          <IconButton aria-label="Riduci"><Minus size={8} strokeWidth={4} /></IconButton>
          <IconButton aria-label="Ripristina"><Copy size={8} strokeWidth={3} /></IconButton>
          <IconButton aria-label="Chiudi"><X size={10} strokeWidth={4} /></IconButton>
        </WindowButtons>
      </TitleBar>
      <MenuBar>
        <FileTab>File</FileTab>
        <MenuItems>
          {menus.map((name) => <MenuItem key={name}>{name}</MenuItem>)}
        </MenuItems>
        <ActiveMenu>Stampe</ActiveMenu>
        <MenuTools>
          <svg width="9" height="7" viewBox="0 0 9 7"><path d="M3 0h6L7 7H0z" fill="#6e8377" /></svg>
          <svg width="8" height="10" viewBox="0 0 8 10"><path d="M0 0h6v9H0z" fill="#e6eef6" /><circle cx="5" cy="5" r="2.500" fill="none" stroke="#2f6fb3" strokeWidth="1.500" /></svg>
          <svg width="9" height="9" viewBox="0 0 9 9" fill="none" stroke="#b9cfc2"><path d="M0 1h4v3H1M3 4v4h2M5 3h3v5H5z" /></svg>
          <svg width="9" height="10" viewBox="0 0 9 10" fill="#fff"><circle cx="4.500" cy="2.500" r="2.500" /><path d="M0 4h9v2H7l1 4H6L4.500 8L3 10H1l1-4H0z" /></svg>
          <span>€</span>
          <FaInfoCircle size={10} />
          <IconButton aria-label="Chiudi scheda"><X size={8} strokeWidth={3} /></IconButton>
        </MenuTools>
      </MenuBar>
      <Ribbon>
        <RibbonRow>
          <RibbonButton $divided $width={60}><PrinterIcon />Stampa ricerca<br />corrente</RibbonButton>
          <RibbonButton $width={64}><LabelIcon />Stampa etichette<br />lavorazioni</RibbonButton>
          <RibbonButton $width={56}><LabelIcon text="RR" />Stampa Ricevute<br />di ritorno</RibbonButton>
          <RibbonButton $width={50}><LabelIcon text="AG" />Stampa avvisi<br />di giacenza</RibbonButton>
        </RibbonRow>
        <RibbonCaption>Stampe</RibbonCaption>
      </Ribbon>
      <Main>
        <SidePanel />
        <Strip $up><span>Anagrafica clienti</span></Strip>
        <CenterArea />
        <Strip>
          <span>Anagrafica destinatari</span>
          <ChevronsLeft size={13} />
        </Strip>
      </Main>
      <StatusBar>
        <ServerState><Led />Connesso al server con il nome utente: admin</ServerState>
        <StatusItem $accent>Avvio veloce (CTRL+Q)<i /></StatusItem>
        <StatusItem $accent>Tracking veloce (F7)<i /></StatusItem>
        <StatusItem $accent>Azioni rapide <Caret /><i /></StatusItem>
        <StatusItem>Nessuna notifica presente<i /></StatusItem>
        <StatusItem>Nessun esito nel cassetto<i /></StatusItem>
        <StatusItem>Ci sono n. 1147 ibride<i /></StatusItem>
        <StatusItem>Ci sono almeno n. 31 allarmi</StatusItem>
      </StatusBar>
      <Tracking />
      <Browser />
    </Desktop>
  </>
);

export default App;
